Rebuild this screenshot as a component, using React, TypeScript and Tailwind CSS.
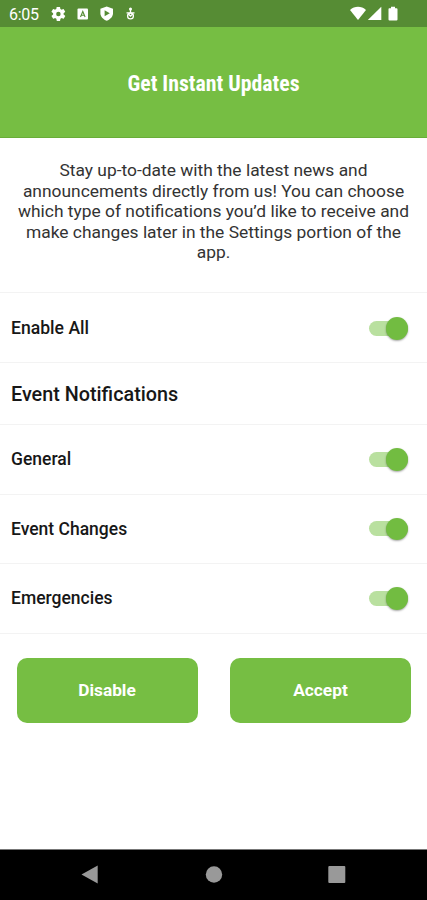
import { useState } from "react";

const events = ["General", "Event Changes", "Emergencies"];

const intro = [
  "Stay up-to-date with the latest news and",
  "announcements directly from us! You can choose",
  "which type of notifications you’d like to receive and",
  "make changes later in the Settings portion of the",
  "app.",
];

function StatusBar() {
  return (
    <div className="h-[27px] shrink-0 bg-[#568c34] text-white">
      <svg width="427" height="27" viewBox="0 0 427 27" fill="currentColor">
        <text x="9" y="19.5" fontSize="16" className="font-['Roboto',sans-serif]" textLength="30">6:05</text>
        {/* settings */}
        <g transform="translate(50 5.5) scale(.7)">
          <path fillRule="evenodd" d="M19.4 13a7.500 7.500 0 0 0 0-2l2.100-1.600a.5.5 0 0 0 .1-.7l-2-3.400a.5.500 0 0 0-.6-.2l-2.500 1a7.300 7.300 0 0 0-1.700-1l-.4-2.600a.5.5 0 0 0-.5-.5h-4a.5.5 0 0 0-.5.5L9 5.100a7.300 7.300 0 0 0-1.700 1l-2.500-1a.5.5 0 0 0-.6.200l-2 3.400a.5.5 0 0 0 .1.700L4.500 11a7.500 7.500 0 0 0 0 2l-2.100 1.600a.5.500 0 0 0-.1.700l2 3.400a.5.500 0 0 0 .6.200l2.500-1a7.300 7.300 0 0 0 1.700 1l.4 2.600a.5.500 0 0 0 .5.500h4a.5.500 0 0 0 .5-.5l.4-2.600a7.300 7.300 0 0 0 1.700-1l2.500 1a.5.500 0 0 0 .6-.2l2-3.400a.5.500 0 0 0-.1-.7zM12 15.200a3.200 3.200 0 1 1 0-6.400 3.200 3.200 0 0 1 0 6.400z" />
        </g>
        {/* keyboard */}
        <rect x="77.500" y="8.500" width="10.500" height="11" rx="1" />
        <path d="M80.500 17l2.300-5.500 2.300 5.500M81.500 15.300h2.600" fill="none" stroke="#568c34" strokeWidth="1.100" />
        {/* play protect */}
        <path d="M106.700 6.500l6.300 2.300v4.500c0 3.300-2.600 6-6.300 7.500-3.700-1.500-6.300-4.200-6.300-7.500V8.800z" />
        <path d="M104.600 10.300l5.200 3-5.200 3z" fill="#568c34" />
        {/* debugging */}
        <g fill="none" stroke="currentColor" strokeWidth="1.300">
          <path d="M130.500 8v5M126.500 12.900h8" />
          <path d="M127.800 13.500l2.700 2.500 2.700-2.500" />
          <circle cx="130.500" cy="16" r="2.900" />
        </g>
        <circle cx="130.500" cy="9" r="1.500" />
        {/* wifi, signal, battery */}
        <path d="M350 10c4.500-4.200 11.500-4.200 16 0l-8 10z" />
        <path d="M381.300 6.700V20h-13.500z" />
        <path d="M389 8.200h2V6.700h4v1.500h1.500a1 1 0 0 1 1 1v10.300a1 1 0 0 1-1 1H389.500a1 1 0 0 1-1-1V9.200a1 1 0 0 1 .5-1z" />
      </svg>
    </div>
  );
}

function Toggle({ on, onClick, label }: { on: boolean; onClick: () => void; label: string }) {
  return (
    <button
      role="switch"
      aria-checked={on}
      aria-label={label}
      onClick={onClick}
      className={`flex h-[15px] w-[39.5px] items-center rounded-full ${on ? "justify-end bg-[#b9e09f]" : "justify-start bg-gray-300"}`}
    >
      <span className={`size-[22.500px] shrink-0 rounded-full shadow-[0_1px_2px_rgba(0,0,0,0.35)] ${on ? "bg-[#72bc41]" : "bg-gray-100"}`} />
    </button>
  );
}

export default function App() {
  const [enabled, setEnabled] = useState<string[]>(events);
  const allOn = enabled.length === events.length;

  const toggle = (name: string) =>
    setEnabled((cur) => (cur.includes(name) ? cur.filter((n) => n !== name) : [...cur, name]));

  return (
    <div className="flex h-[900px] w-[427px] flex-col overflow-hidden bg-white font-['Roboto',sans-serif] text-[#171717]">
      <StatusBar />
      <header className="flex h-[111px] shrink-0 items-center justify-center border-b border-[#69ad39] bg-[#76be43] pt-1">
        <h1 className="text-[21.8px] font-bold text-white [font-stretch:75%]">Get Instant Updates</h1>
      </header>

      <div className="h-[154px] shrink-0 pt-[22px] text-center text-[17.4px] leading-[20.6px] text-[#333]">
        {intro.map((line) => (
          <p key={line} className="whitespace-nowrap">{line}</p>
        ))}
      </div>

      <div className="flex h-[71px] shrink-0 items-center justify-between border-y border-[#f3f3f3] pt-0.5 pr-[19px] pl-[11px]">
        <span className="text-[17.6px] font-medium">Enable All</span>
        <Toggle on={allOn} label="Enable All" onClick={() => setEnabled(allOn ? [] : events)} />
      </div>
      <h2 className="flex h-[62px] shrink-0 items-center border-b border-[#f3f3f3] pt-[3px] pl-[11px] text-[19.8px] font-medium">
        Event Notifications
      </h2>
      {events.map((name) => (
        <div key={name} className="flex h-[69.5px] shrink-0 items-center justify-between border-b border-[#f3f3f3] pr-[19px] pl-[11px]">
          <span className="text-[17.5px] font-medium">{name}</span>
          <Toggle on={enabled.includes(name)} label={name} onClick={() => toggle(name)} />
        </div>
      ))}

      <div className="grid grid-cols-2 gap-8 px-4 pt-[24px] pl-[17px]">
        <button className="h-[65px] rounded-[10px] bg-[#76be43] pt-0.5 pr-px text-[17.3px] font-bold text-white" onClick={() => setEnabled([])}>
          Disable
        </button>
        <button className="h-[65px] rounded-[10px] bg-[#76be43] pt-0.5 text-[17.3px] font-bold text-white">
          Accept
        </button>
      </div>

      <nav className="mt-auto h-[51px] shrink-0 border-t border-[#777] bg-black">
        <svg width="427" height="50" viewBox="0 0 427 50" fill="#999">
          <path d="M81.500 24.500L97.700 15.500v18z" />
          <circle cx="214" cy="24.500" r="8.200" />
          <rect x="328.300" y="16" width="17" height="17" rx="1" />
        </svg>
      </nav>
    </div>
  );
}
